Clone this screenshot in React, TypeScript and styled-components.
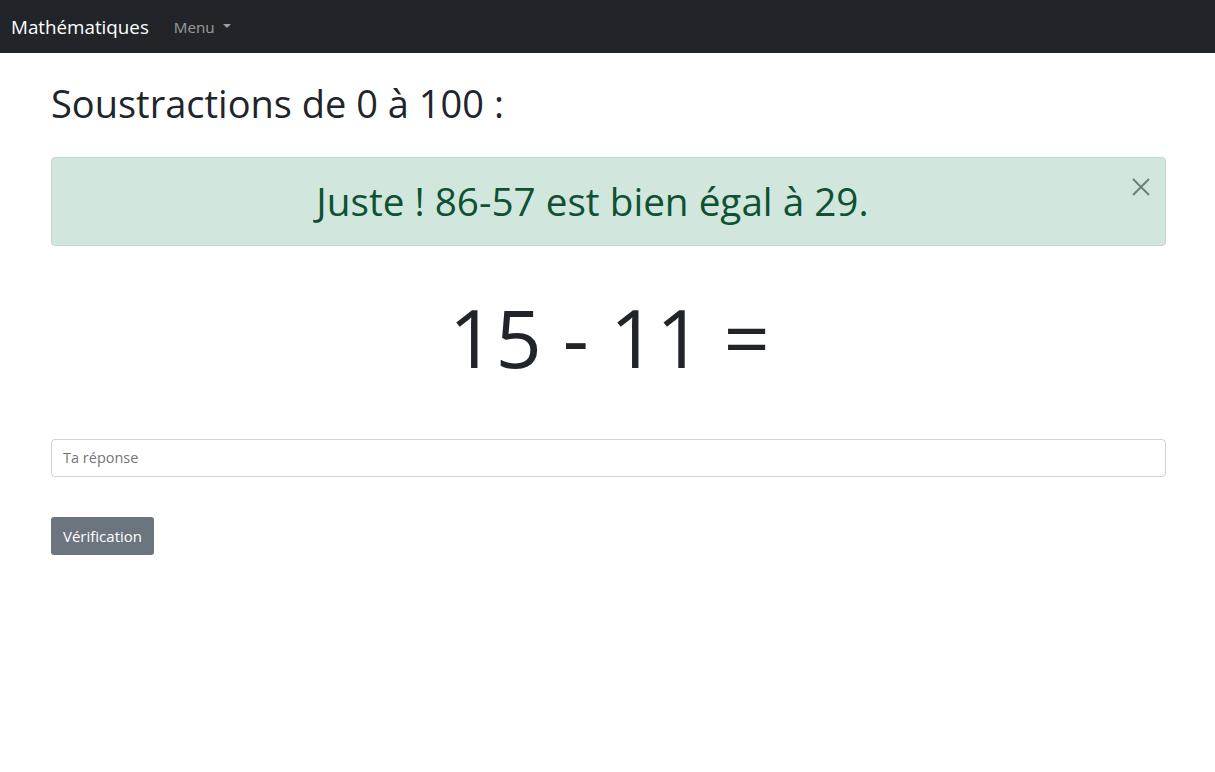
import React from "react";
import styled, { createGlobalStyle } from "styled-components";

const GlobalStyle = createGlobalStyle`
  body {
    margin: 0;
    background: #ffffff;
    font-family: "Open Sans", "Noto Sans", sans-serif;
    color: #212529;
  }
`;

const Navbar = styled.nav`
  display: flex;
  align-items: center;
  height: 53px;
  padding: 0 11px;
  background: #212529;
  box-sizing: border-box;
`;

const Brand = styled.span`
  font-size: 18.8px;
  color: #ffffff;
  margin-right: 25px;
  margin-top: 1px;
`;

const MenuToggle = styled.span`
  display: flex;
  align-items: center;
  gap: 8px;
  font-size: 15.2px;
  color: rgba(255, 255, 255, 0.55);
`;

const Caret = styled.span`
  width: 0;
  height: 0;
  border-left: 4px solid transparent;
  border-right: 4px solid transparent;
  border-top: 4px solid rgba(255, 255, 255, 0.55);
  margin-top: -2px;
`;

const Container = styled.main`
  padding: 0 49px 0 51px;
`;

const Title = styled.h1`
  font-size: 38px;
  font-weight: 400;
  line-height: 1.2;
  margin: 28px 0 30px;
`;

const Alert = styled.div`
  position: relative;
  height: 89px;
  box-sizing: border-box;
  display: flex;
  align-items: center;
  justify-content: center;
  padding: 0 52px 0 20px;
  background: #d1e7dd;
  border: 1px solid #badbcc;
  border-radius: 4px;
  color: #0f5132;
  font-size: 38.7px;
`;

const CloseButton = styled.button`
  position: absolute;
  top: 20px;
  right: 15px;
  padding: 0;
  border: 0;
  background: none;
  display: flex;
  cursor: pointer;
`;

const Equation = styled.div`
  text-align: center;
  font-size: 81px;
  line-height: 1;
  margin: 50px 0 62px;
  padding-left: 2px;
`;

const Field = styled.input`
  display: block;
  width: 100%;
  height: 38px;
  box-sizing: border-box;
  border: 1px solid #ced4da;
  border-radius: 4px;
  padding: 0 11px;
  font-family: inherit;
  font-size: 14.5px;
  color: #212529;

  ::placeholder {
    color: #6c757d;
  }
`;

const Button = styled.button`
  margin-top: 40px;
  height: 38px;
  padding: 0 12px;
  border: 0;
  border-radius: 3px;
  background: #6c757d;
  color: #ffffff;
  font-family: inherit;
  font-size: 15px;
`;

export default function App() {
  return (
    <>
      <GlobalStyle />
      <Navbar>
        <Brand>Mathématiques</Brand>
        <MenuToggle>
          Menu
          <Caret />
        </MenuToggle>
      </Navbar>
      <Container>
        <Title>Soustractions de 0 à 100 :</Title>
        <Alert>
          Juste ! 86-57 est bien égal à 29.
          <CloseButton aria-label="Fermer">
            <svg width="18" height="18" viewBox="0 0 18 18">
              <path
                d="M1 1 L17 17 M17 1 L1 17"
                stroke="#6b7d74"
                strokeWidth="1.8"
              />
            </svg>
          </CloseButton>
        </Alert>
        <Equation>15 - 11 =</Equation>
        <Field placeholder="Ta réponse" />
        <Button>Vérification</Button>
      </Container>
    </>
  );
}
